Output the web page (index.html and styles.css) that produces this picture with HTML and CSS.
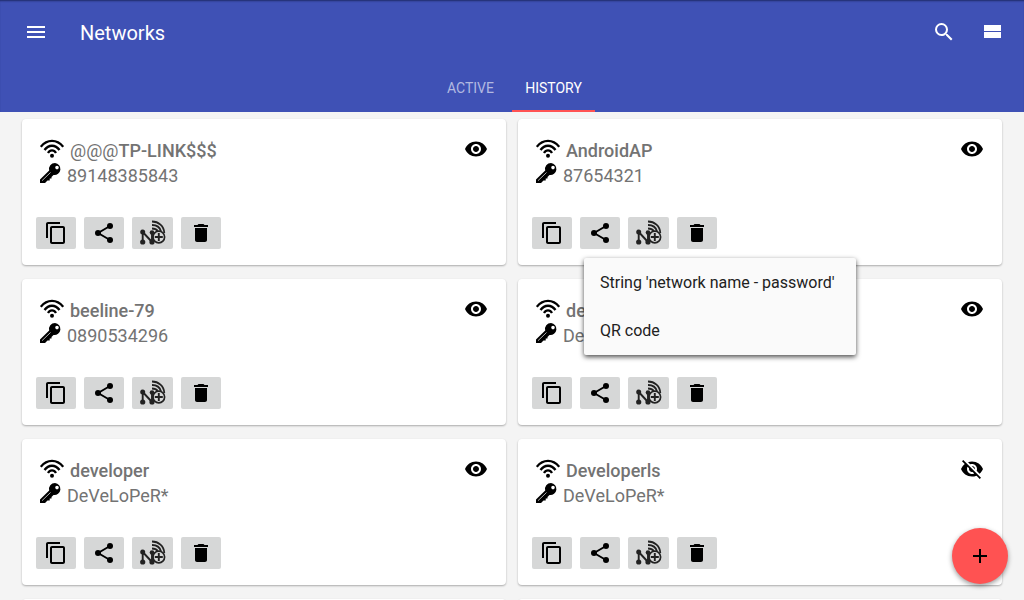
FILE: index.html
```
<!DOCTYPE html>
<html lang="en">
<head>
<meta charset="utf-8">
<meta name="viewport" content="width=device-width, initial-scale=1">
<title>Networks</title>
<link rel="stylesheet" href="styles.css">
</head>
<body>
<svg class="sprite" aria-hidden="true">
  <symbol id="i-menu" viewBox="0 0 24 24"><path d="M3 18h18v-2H3v2zm0-5h18v-2H3v2zm0-7v2h18V6H3z"/></symbol>
  <symbol id="i-search" viewBox="0 0 24 24"><path d="M15.5 14h-.79l-.28-.27A6.471 6.471 0 0 0 16 9.5 6.5 6.5 0 1 0 9.5 16c1.61 0 3.09-.59 4.23-1.57l.27.28v.79l5 4.99L20.49 19l-4.99-5zm-6 0C7.01 14 5 11.99 5 9.5S7.01 5 9.5 5 14 7.01 14 9.5 11.99 14 9.5 14z"/></symbol>
  <symbol id="i-rows" viewBox="0 0 24 24"><path d="M4 5h17v6H4zM4 12h17v6H4z"/></symbol>
  <symbol id="i-copy" viewBox="0 0 24 24"><path d="M16 1H4c-1.1 0-2 .9-2 2v14h2V3h12V1zm3 4H8c-1.1 0-2 .9-2 2v14c0 1.100.9 2 2 2h11c1.100 0 2-.9 2-2V7c0-1.100-.9-2-2-2zm0 16H8V7h11v14z"/></symbol>
  <symbol id="i-share" viewBox="0 0 24 24"><path d="M6 12 18 5M6 12l12 7" fill="none" stroke="currentColor" stroke-width="2"/><circle cx="18" cy="5" r="3"/><circle cx="6" cy="12" r="3"/><circle cx="18" cy="19" r="3"/></symbol>
  <symbol id="i-delete" viewBox="0 0 24 24"><path d="M6 19c0 1.100.9 2 2 2h8c1.100 0 2-.9 2-2V7H6v12zM19 4h-3.500l-1-1h-5l-1 1H5v2h14V4z"/></symbol>
  <symbol id="i-nfc" viewBox="0 0 26 26">
    <g fill="none" stroke="currentColor">
      <path d="M2.700 22V12l9.300 10V12" stroke-width="1.900"/>
      <path d="M12 1.500C18.500 1.500 24 6 24.300 13M12 5c4.500 0 8 2.500 9 6.500M12 8.500c2.500 0 4.500.8 5.700 2.500" stroke-width="1.800"/>
      <circle cx="18.800" cy="17" r="5.800" stroke-width="1.700"/>
      <path d="M14.800 17h8M18.800 13v8" stroke-width="1.900"/>
    </g>
    <circle cx="2.700" cy="12" r="2.500"/><circle cx="2.700" cy="22" r="2.600"/><circle cx="12" cy="22" r="2.600"/><circle cx="12" cy="12.500" r="2.300"/>
  </symbol>
  <symbol id="i-eye" viewBox="0 0 24 24"><path d="M12 4.500C7 4.500 2.730 7.610 1 12c1.730 4.390 6 7.500 11 7.500s9.270-3.110 11-7.500c-1.730-4.390-6-7.500-11-7.500zM12 17c-2.760 0-5-2.240-5-5s2.240-5 5-5 5 2.240 5 5-2.240 5-5 5zm0-8c-1.660 0-3 1.340-3 3s1.340 3 3 3 3-1.340 3-3-1.340-3-3-3z"/></symbol>
  <symbol id="i-eye-off" viewBox="0 0 24 24"><path d="M12 7c2.760 0 5 2.240 5 5 0 .65-.13 1.260-.36 1.830l2.920 2.920c1.510-1.260 2.700-2.890 3.430-4.750-1.730-4.390-6-7.500-11-7.500-1.400 0-2.740.25-3.980.7l2.160 2.160C10.740 7.130 11.350 7 12 7zM2 4.270l2.280 2.280.46.46A11.804 11.804 0 0 0 1 12c1.730 4.390 6 7.500 11 7.500 1.550 0 3.030-.3 4.380-.84l.42.42L19.730 22 21 20.730 3.270 3 2 4.270zM7.530 9.800l1.550 1.550c-.05.21-.08.43-.08.65 0 1.660 1.340 3 3 3 .22 0 .44-.03.65-.08l1.550 1.550c-.67.33-1.410.53-2.200.53-2.760 0-5-2.240-5-5 0-.79.2-1.530.53-2.200zm4.310-.78 3.150 3.150.02-.16c0-1.660-1.340-3-3-3l-.17.01z"/></symbol>
  <symbol id="i-wifi" viewBox="0 0 24 20">
    <g fill="none" stroke="currentColor" stroke-width="2.300"><path d="M.8 7.800C7-.2 17-.2 23.200 7.800M4.500 11C8.500 5.300 15.500 5.300 19.500 11M8 14c2-3.400 6-3.400 8 0"/></g>
    <circle cx="12" cy="16.700" r="2"/>
  </symbol>
  <symbol id="i-key" viewBox="0 0 22 20"><path fill-rule="evenodd" d="M15 0a6 6 0 1 1-1.500 11.900L11.500 14v1.500H9.700v2H7.500L5 20H0v-3.500L9.200 7.500A6 6 0 0 1 15 0zm2 2.800a1.800 1.800 0 1 0 0 3.600 1.800 1.800 0 0 0 0-3.600z"/><path d="m2 17.700 8.500-8.200" fill="none" stroke="#fff" stroke-width=".7"/></symbol>
  <symbol id="i-add" viewBox="0 0 24 24"><path d="M19 13h-6v6h-2v-6H5v-2h6V5h2v6h6v2z"/></symbol>
</svg>

<div class="app">
  <header class="header">
    <div class="toolbar">
      <button class="icon-button" type="button" aria-label="Menu"><svg class="icon"><use href="#i-menu"/></svg></button>
      <h1 class="title">Networks</h1>
      <button class="icon-button" type="button" aria-label="Search"><svg class="icon"><use href="#i-search"/></svg></button>
      <button class="icon-button" type="button" aria-label="Change view"><svg class="icon"><use href="#i-rows"/></svg></button>
    </div>
    <nav class="tabs">
      <button class="tab" type="button">ACTIVE</button>
      <button class="tab tab-selected" type="button">HISTORY</button>
    </nav>
  </header>

  <main class="list" id="list"></main>

  <button class="fab" type="button" aria-label="Add network"><svg class="icon"><use href="#i-add"/></svg></button>
</div>
<script src="app.js"></script>
</body>
</html>
```
FILE: styles.css
```
* {
  box-sizing: border-box;
}

body {
  margin: 0;
  background: #f4f4f4;
  color: #737373;
  font-family: Roboto, "Noto Sans", sans-serif;
}

button {
  margin: 0;
  padding: 0;
  border: 0;
  background: none;
  color: inherit;
  font: inherit;
  cursor: pointer;
}

.sprite {
  position: absolute;
  width: 0;
  height: 0;
}

.icon {
  display: block;
  width: 24px;
  height: 24px;
  fill: currentColor;
}

.app {
  display: flex;
  flex-direction: column;
  height: 100vh;
  overflow: hidden;
}

.header {
  flex: none;
  background: #3f51b5;
  box-shadow: inset 0 2px 2px -1px #1f2a68;
  color: #fff;
}

.toolbar {
  display: flex;
  align-items: center;
  height: 64px;
  padding: 0 8px 0 12px;
}

.icon-button {
  display: grid;
  place-items: center;
  width: 48px;
  height: 48px;
}

.title {
  flex: 1;
  margin: 0;
  padding: 2px 0 0 20px;
  font-size: 20px;
  font-weight: 400;
  line-height: 24px;
}

.tabs {
  display: grid;
  grid-template-columns: 83px 83px;
  justify-content: center;
  height: 48px;
}

.tab {
  padding-top: 2px;
  border-bottom: 2px solid transparent;
  color: #b2b9e1;
  font-size: 14px;
  font-weight: 400;
}

.tab-selected {
  border-bottom-color: #ff5252;
  color: #fff;
}

.list {
  flex: 1;
  display: grid;
  grid-template-columns: 1fr 1fr;
  grid-auto-rows: max-content;
  gap: 14px 12px;
  min-height: 0;
  padding: 7px 22px;
  overflow-y: auto;
  scrollbar-width: none;
}

.card {
  position: relative;
  display: flex;
  flex-direction: column;
  justify-content: space-between;
  min-height: 146px;
  padding: 18px 18px 16px 14px;
  border-radius: 4px;
  background: #fff;
  box-shadow: 0 1px 2px rgba(0, 0, 0, 0.3);
}

.card-top {
  display: flex;
  justify-content: space-between;
  align-items: flex-start;
  padding-left: 4px;
  color: #000;
}

.details {
  padding-top: 1px;
}

.line {
  display: flex;
  align-items: center;
  height: 25px;
  margin: 0;
  color: #737373;
  font-size: 18px;
  font-weight: 400;
  line-height: 25px;
}

.name {
  gap: 6px;
  font-weight: 500;
}

.light {
  font-weight: 400;
}

.secret {
  gap: 5px;
}

.wifi,
.key {
  flex: none;
  height: 20px;
  color: #000;
  fill: currentColor;
}

.wifi {
  width: 24px;
  margin-bottom: 4px;
}

.key {
  width: 22px;
  margin-bottom: 6px;
}

.actions {
  display: flex;
  gap: 8px;
}

.action {
  display: grid;
  place-items: center;
  width: 40px;
  height: 32px;
  border-radius: 2px;
  background: #d6d7d7;
  color: #000;
}

.action-nfc {
  width: 41px;
  color: #222;
}

.action-nfc .icon {
  width: 26px;
  height: 26px;
}

.menu {
  position: absolute;
  z-index: 1;
  top: 139px;
  left: 66px;
  min-width: 272px;
  padding-bottom: 1px;
  border-radius: 2px;
  background: #fafafa;
  box-shadow: 0 2px 5px rgba(0, 0, 0, 0.7);
}

.menu-item {
  display: block;
  width: 100%;
  height: 48px;
  padding: 0 16px;
  color: #212121;
  font-size: 16px;
  text-align: left;
  white-space: nowrap;
}

.fab {
  position: fixed;
  right: 16px;
  bottom: 16px;
  z-index: 2;
  display: grid;
  place-items: center;
  width: 56px;
  height: 56px;
  border-radius: 50%;
  background: #ff5252;
  box-shadow: 0 2px 5px rgba(0, 0, 0, 0.4);
  color: #000;
}
```
FILE: app.js
```
const networks = [
  { name: '<span class="light">@@@</span>TP-LINK$$$', secret: '89148385843' },
  { name: 'AndroidAP', secret: '87654321', menu: true },
  { name: 'beeline-79', secret: '0890534296' },
  { name: 'de', secret: 'De' },
  { name: 'developer', secret: 'DeVeLoPeR*' },
  { name: 'Developerls', secret: 'DeVeLoPeR*', hidden: true },
];

const icon = (id, cls = 'icon') => `<svg class="${cls}" aria-hidden="true"><use href="#i-${id}"/></svg>`;

const action = (id, label) =>
  `<button class="action action-${id}" type="button" aria-label="${label}">${icon(id)}</button>`;

const menu = `
  <div class="menu" role="menu">
    <button class="menu-item" type="button" role="menuitem">String 'network name - password'</button>
    <button class="menu-item" type="button" role="menuitem">QR code</button>
  </div>`;

const card = (n) => `
  <article class="card">
    <div class="card-top">
      <div class="details">
        <h2 class="line name">${icon('wifi', 'wifi')}<span>${n.name}</span></h2>
        <p class="line secret">${icon('key', 'key')}<span>${n.secret}</span></p>
      </div>
      <button type="button" aria-label="Toggle visibility">${icon(n.hidden ? 'eye-off' : 'eye')}</button>
    </div>
    <div class="actions">
      ${action('copy', 'Copy')}${action('share', 'Share')}${action('nfc', 'Write tag')}${action('delete', 'Delete')}
    </div>
    ${n.menu ? menu : ''}
  </article>`;

const emptyCard = '<article class="card"></article>';

document.getElementById('list').innerHTML = networks.map(card).join('') + emptyCard + emptyCard;
```
